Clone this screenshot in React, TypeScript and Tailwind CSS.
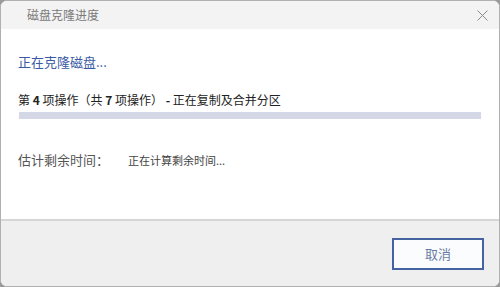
export default function App() {
  const font = { fontFamily: '"Noto Sans CJK SC", "Liberation Sans", sans-serif' };
  return (
    <div className="w-[500px] h-[287px] bg-[#9a9a9a]" style={font}>
      <div className="w-[500px] h-[287px] rounded-[7px] border border-[#b0b0b0] overflow-hidden flex flex-col bg-white">
        <div className="h-[28px] shrink-0 bg-[#f3f3f3] flex items-center pl-[26px] pr-[11px]">
          <span className="text-[12px] text-[#7a7a7a] leading-none">磁盘克隆进度</span>
          <svg className="ml-auto" width="11" height="11" viewBox="0 0 11 11">
            <path d="M0.5 0.5 L10.5 10.5 M10.5 0.5 L0.5 10.5" stroke="#8a8a8a" strokeWidth="1" />
          </svg>
        </div>
        <div className="flex-1 flex flex-col px-[17px] pt-[24px]">
          <div className="text-[13px] leading-[18px] text-[#3a5aa6]">正在克隆磁盘...</div>
          <div className="mt-[21px] text-[12px] leading-[16px] text-[#222]">
            第 <b>4</b> 项操作（共 <b>7</b> 项操作） <b>-</b> 正在复制及合并分区
          </div>
          <div className="mt-[4px] h-[7px] mx-[1px] bg-[#d4d8e6]" />
          <div className="mt-[32px] flex items-center">
            <span className="text-[13px] leading-[18px] text-[#555] w-[110px]">估计剩余时间：</span>
            <span className="text-[11px] leading-[16px] text-[#444]">正在计算剩余时间...</span>
          </div>
        </div>
        <div className="h-[67px] shrink-0 border-t-2 border-[#d6d6d6] bg-[#efefef] flex items-start justify-end pr-[15px] pt-[17px]">
          <button className="w-[92px] h-[32px] border-2 border-[#4563a0] bg-[#fbfcfe] text-[13px] text-[#6a7ca5]">取消</button>
        </div>
      </div>
    </div>
  );
}
